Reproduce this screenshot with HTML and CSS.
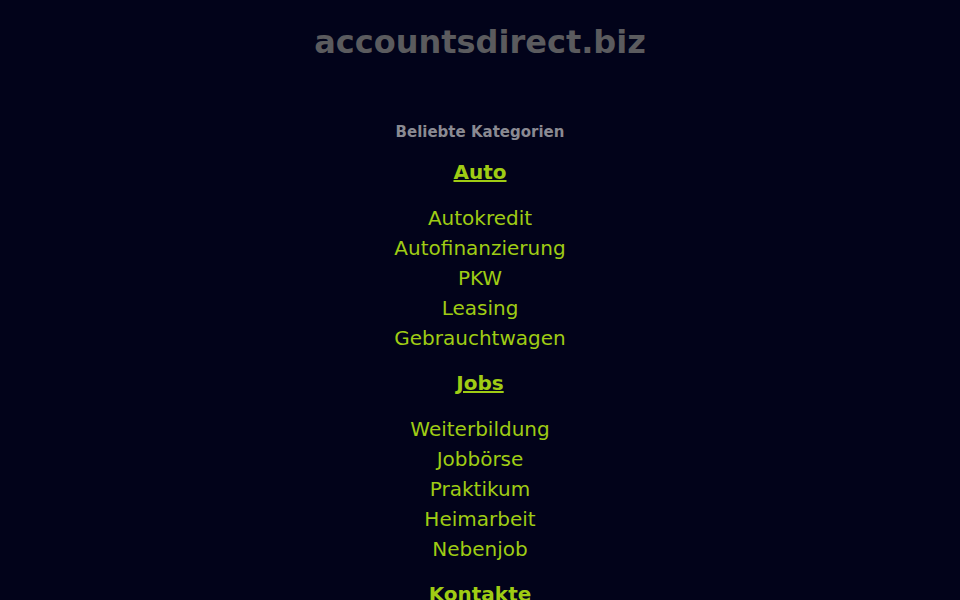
FILE: index.html
```html
<!DOCTYPE html>
<html lang="de">
<head>
<meta charset="utf-8">
<title>accountsdirect.biz</title>
<link rel="stylesheet" href="styles.css">
</head>
<body>
<header class="site-header">
  <h1 class="site-title">accountsdirect.biz</h1>
</header>
<main class="categories">
  <h2 class="categories-title">Beliebte Kategorien</h2>
  <section class="group">
    <a class="group-title" href="#">Auto</a>
    <ul class="links">
      <li><a href="#">Autokredit</a></li>
      <li><a href="#">Autofinanzierung</a></li>
      <li><a href="#">PKW</a></li>
      <li><a href="#">Leasing</a></li>
      <li><a href="#">Gebrauchtwagen</a></li>
    </ul>
  </section>
  <section class="group">
    <a class="group-title" href="#">Jobs</a>
    <ul class="links">
      <li><a href="#">Weiterbildung</a></li>
      <li><a href="#">Jobbörse</a></li>
      <li><a href="#">Praktikum</a></li>
      <li><a href="#">Heimarbeit</a></li>
      <li><a href="#">Nebenjob</a></li>
    </ul>
  </section>
  <section class="group">
    <a class="group-title" href="#">Kontakte</a>
    <ul class="links">
      <li><a href="#">Partnersuche</a></li>
      <li><a href="#">Singles</a></li>
    </ul>
  </section>
</main>
</body>
</html>
```
FILE: styles.css
```css
html, body {
  margin: 0;
  padding: 0;
  background: #02031a;
  font-family: "DejaVu Sans", sans-serif;
  text-align: center;
}
.site-header {
  padding-top: 22px;
}
.site-title {
  margin: 0;
  font-size: 32px;
  line-height: 40px;
  font-weight: bold;
  color: #5b5b5e;
}
.categories {
  margin-top: 61px;
}
.categories-title {
  margin: 0;
  font-size: 15px;
  line-height: 19px;
  font-weight: bold;
  color: #8a8a92;
}
.group {
  display: flex;
  flex-direction: column;
  align-items: center;
  margin-top: 15px;
}
.group-title {
  display: block;
  font-size: 20px;
  line-height: 30px;
  font-weight: bold;
  color: #9fcc14;
  text-decoration: underline;
}
.links {
  list-style: none;
  margin: 16px 0 0;
  padding: 0;
}
.links li {
  font-size: 20px;
  line-height: 30px;
}
.links a {
  color: #9fcc14;
  text-decoration: none;
}
```
